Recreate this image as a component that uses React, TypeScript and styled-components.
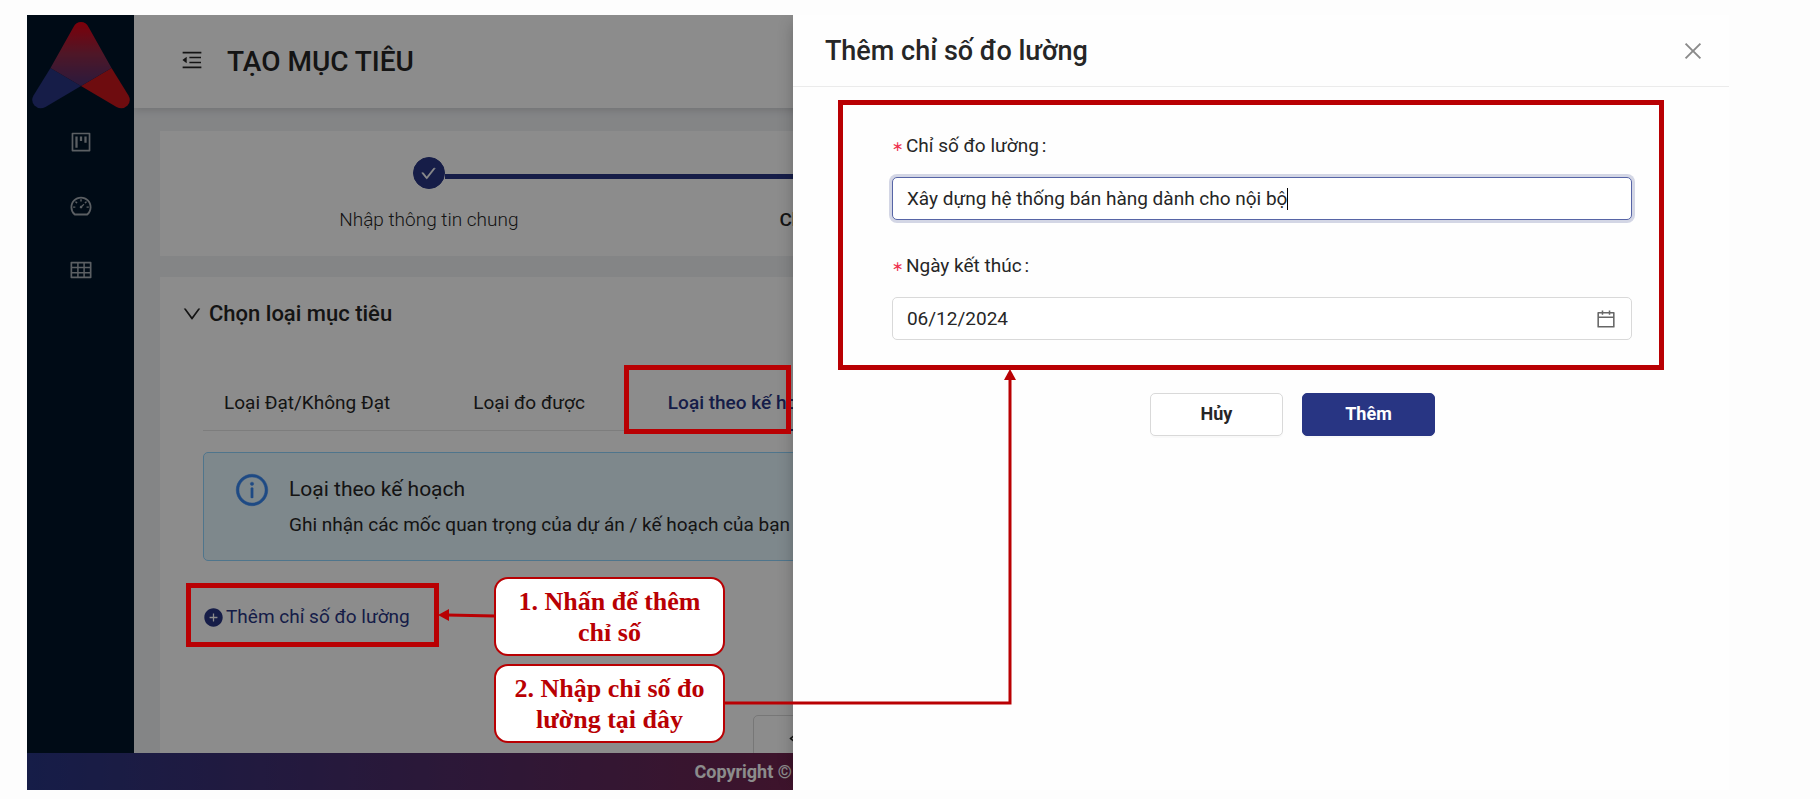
import React from "react";
import styled, { createGlobalStyle } from "styled-components";
import {
  AiOutlineMenuFold,
  AiOutlineProject,
  AiOutlineDashboard,
  AiOutlineTable,
  AiOutlineCalendar,
  AiOutlineClose,
  AiOutlineCheck,
  AiOutlineInfoCircle,
  AiOutlineDown,
  AiOutlineLeft,
  AiFillPlusCircle,
} from "react-icons/ai";

const color = {
  primary: "#283583",
  text: "#262626",
  border: "#d9d9d9",
  mark: "#b90003",
};

const GlobalStyle = createGlobalStyle`
  *, *::before, *::after { box-sizing: border-box; }
  body {
    margin: 0;
    background: #fdfdfd;
    color: ${color.text};
    font-family: Roboto, "Liberation Sans", sans-serif;
    font-size: 19px;
    line-height: 28px;
  }
  h1, h2, h3, p { margin: 0; }
  button, input { font: inherit; color: inherit; }
  svg { display: block; }
`;

const Page = styled.div`
  padding: 15px 91px 9px 27px;
`;

const Screen = styled.div`
  position: relative;
  display: flex;
  flex-direction: column;
  height: calc(100vh - 24px);
  min-height: 640px;
  overflow: hidden;
`;

const Body = styled.div`
  display: flex;
  flex: 1;
  min-height: 0;
`;

const Sidebar = styled.nav`
  display: flex;
  flex-direction: column;
  align-items: center;
  width: 107px;
  flex: none;
  background: #001529;
`;

const LogoLink = styled.a`
  display: block;
  height: 95px;
`;

const NavLink = styled.a`
  display: flex;
  align-items: center;
  justify-content: center;
  width: 100%;
  height: 64px;
  color: rgba(255, 255, 255, 0.65);
  font-size: 24px;
`;

const Main = styled.main`
  flex: 1;
  min-width: 0;
  overflow: hidden;
  background: #f0f2f5;
`;

const Header = styled.header`
  display: flex;
  align-items: center;
  gap: 15px;
  height: 93px;
  padding-left: 38px;
  background: #fff;
  box-shadow: 0 2px 8px rgba(0, 0, 0, 0.15);
`;

const FoldButton = styled.button`
  display: flex;
  align-items: center;
  justify-content: center;
  width: 40px;
  height: 46px;
  padding: 0 0 4px;
  border: 0;
  background: none;
  font-size: 24px;
`;

const PageTitle = styled.h1`
  font-size: 28px;
  line-height: 40px;
  font-weight: 500;
`;

const Content = styled.div`
  display: flex;
  flex-direction: column;
  gap: 21px;
  padding: 23px 44px 0 26px;
`;

const Card = styled.section`
  background: #fff;
`;

const Steps = styled.ol`
  display: grid;
  grid-template-columns: repeat(3, 1fr);
  height: 125px;
  margin: 0;
  padding: 26px 22px 0;
  list-style: none;
`;

const Step = styled.li<{ $current?: boolean }>`
  display: flex;
  flex-direction: column;
  align-items: center;
  gap: 17px;
  font-weight: ${(p) => (p.$current ? 500 : 300)};
  white-space: nowrap;
`;

const StepTrack = styled.div`
  display: flex;
  align-items: center;
  width: 100%;
`;

const StepLine = styled.span<{ $done?: boolean; $hidden?: boolean }>`
  flex: 1;
  height: 5px;
  margin-top: 6px;
  background: ${(p) => (p.$hidden ? "transparent" : p.$done ? color.primary : "#f0f0f0")};
`;

const StepDot = styled.span<{ $done?: boolean }>`
  display: flex;
  align-items: center;
  justify-content: center;
  width: 32px;
  height: 32px;
  border-radius: 50%;
  background: ${(p) => (p.$done ? color.primary : "#fff")};
  border: 1px solid ${color.primary};
  color: #fff;
  font-size: 17px;

  svg { stroke-width: 32px; }
`;

const SectionTitle = styled.h2`
  display: flex;
  align-items: center;
  gap: 6px;
  padding: 22px 0 0 21px;
  font-size: 22px;
  line-height: 30px;
  font-weight: 500;
`;

const SectionBody = styled.div`
  padding: 51px 43px 0;
`;

const TabList = styled.div`
  display: flex;
  gap: 41px;
  border-bottom: 1px solid #e3e3e3;
`;

const Tab = styled.button<{ $active?: boolean }>`
  height: 51px;
  margin-bottom: -1px;
  padding: 0 21px 4px;
  border: 0;
  border-bottom: 2px solid ${(p) => (p.$active ? color.primary : "transparent")};
  background: none;
  color: ${(p) => (p.$active ? color.primary : "inherit")};
  font-weight: ${(p) => (p.$active ? 500 : 400)};
  white-space: nowrap;
`;

const Alert = styled.div`
  display: flex;
  gap: 19px;
  height: 109px;
  margin-top: 21px;
  padding: 18px 30px;
  border: 1px solid #91d5ff;
  border-radius: 5px;
  background: #e6f7ff;
`;

const AlertIcon = styled.span`
  color: #3787f0;
  font-size: 36px;
  padding-top: 1px;

  svg { stroke-width: 14px; }
`;

const AlertTitle = styled.h3`
  font-size: 21px;
  line-height: 36px;
  font-weight: 400;
`;

const AlertText = styled.p`
  line-height: 36px;
  white-space: nowrap;
`;

const AddButton = styled.button`
  display: flex;
  align-items: center;
  gap: 2px;
  margin-top: 42px;
  padding: 0;
  border: 0;
  background: none;
  color: ${color.primary};
`;

const BackRow = styled.div`
  display: flex;
  justify-content: center;
  padding: 84px 0 20px;
`;

const BackButton = styled.button`
  display: flex;
  align-items: center;
  gap: 12px;
  width: 340px;
  height: 46px;
  padding: 0 31px;
  border: 1px solid ${color.border};
  border-radius: 5px;
  background: #fff;
`;

const Footer = styled.footer`
  height: 37px;
  flex: none;
  background: linear-gradient(90deg, #283583, #ca1010);
`;

const FooterText = styled.p`
  width: 45%;
  padding-right: 1px;
  color: #fff;
  font-size: 18px;
  font-weight: 700;
  line-height: 37px;
  text-align: right;
`;

const Mask = styled.div`
  position: absolute;
  inset: 0;
  background: rgba(0, 0, 0, 0.45);
`;

const Drawer = styled.aside`
  position: absolute;
  top: 0;
  right: 0;
  bottom: 0;
  width: 55%;
  background: #fefefe;
  box-shadow: -6px 0 16px -8px rgba(0, 0, 0, 0.3);
`;

const DrawerHeader = styled.header`
  display: flex;
  align-items: center;
  justify-content: space-between;
  height: 72px;
  padding: 0 24px 0 32px;
  border-bottom: 1px solid #ebebeb;
`;

const DrawerTitle = styled.h2`
  font-size: 27px;
  line-height: 36px;
  font-weight: 500;
`;

const CloseButton = styled.button`
  padding: 0;
  border: 0;
  background: none;
  color: #8a8a8a;
  font-size: 24px;
`;

const Form = styled.form`
  padding: 13px 65px 0 45px;
`;

const Fields = styled.div`
  display: flex;
  flex-direction: column;
  gap: 31px;
  padding: 27px 27px 24px 49px;
  border: 5px solid ${color.mark};
`;

const Field = styled.div`
  display: flex;
  flex-direction: column;
  gap: 17px;
`;

const Label = styled.label`
  display: flex;
  gap: 5px;
`;

const Required = styled.span`
  width: 9px;
  color: #ee3350;
  font-family: "DejaVu Sans", sans-serif;
  font-size: 14px;
  text-align: center;
`;

const LabelText = styled.span`
  &::after {
    content: ":";
    margin-left: 3px;
  }
`;

const InputBox = styled.div<{ $focused?: boolean }>`
  display: flex;
  align-items: center;
  height: 43px;
  margin-bottom: 1px;
  padding: 0 14px;
  border: 1px solid ${(p) => (p.$focused ? "#5765a6" : color.border)};
  border-radius: 5px;
  background: #fff;
  box-shadow: ${(p) => (p.$focused ? "0 0 0 3px rgba(40, 53, 131, 0.2)" : "none")};
  color: #666;
  font-size: 22px;
`;

const TextInput = styled.input<{ $fit?: boolean }>`
  ${(p) => (p.$fit ? "field-sizing: content;" : "flex: 1;")}
  min-width: 0;
  padding: 0;
  border: 0;
  outline: 0;
  background: none;
  color: ${color.text};
  font-size: 19px;
`;

const Caret = styled.span`
  width: 1px;
  height: 22px;
  background: #000;
`;

const Actions = styled.div`
  display: flex;
  justify-content: center;
  gap: 19px;
  padding: 23px 0 0 83px;
`;

const ActionButton = styled.button<{ $primary?: boolean }>`
  width: 133px;
  height: 43px;
  padding: 0 0 2px;
  border: 1px solid ${(p) => (p.$primary ? color.primary : color.border)};
  border-radius: 5px;
  background: ${(p) => (p.$primary ? color.primary : "#fff")};
  box-shadow: 0 2px 0 rgba(0, 0, 0, 0.02);
  color: ${(p) => (p.$primary ? "#fff" : color.text)};
  font-size: 18px;
  font-weight: 700;
`;

const Annotations = styled.div`
  position: absolute;
  inset: 0;
  pointer-events: none;
`;

const Frame = styled.div<{ $x: number; $y: number; $w: number; $h: number }>`
  position: absolute;
  left: ${(p) => p.$x}px;
  top: ${(p) => p.$y}px;
  width: ${(p) => p.$w}px;
  height: ${(p) => p.$h}px;
  border: 5px solid ${color.mark};
`;

const Callout = styled.div<{ $y: number }>`
  position: absolute;
  left: 467px;
  top: ${(p) => p.$y}px;
  display: flex;
  align-items: center;
  justify-content: center;
  width: 231px;
  height: 79px;
  padding: 0 16px;
  border: 2px solid ${color.mark};
  border-radius: 14px;
  background: #fff;
  color: ${color.mark};
  font-family: "Liberation Serif", "Times New Roman", serif;
  font-size: 26px;
  line-height: 31px;
  font-weight: 700;
  text-align: center;
`;

const Arrows = styled.svg`
  position: absolute;
  left: 0;
  top: 0;
  overflow: visible;
`;

function Logo() {
  return (
    <svg width="98" height="95" viewBox="0 0 98 95" aria-hidden="true">
      <defs>
        <linearGradient id="peak" x1="0" y1="0" x2="0" y2="1">
          <stop offset="0" stopColor="#e30012" />
          <stop offset="0.5" stopColor="#8f2a48" />
          <stop offset="1" stopColor="#4f3070" />
        </linearGradient>
      </defs>
      <path d="M18.500 53 L49 71 L13.500 92 Q7 95 2.500 90.500 Q-1.500 86 1.500 80.500 Z" fill="#283583" />
      <path d="M79.500 53 L49 71 L84.500 92 Q91 95 95.500 90.500 Q99.500 86 96.500 80.500 Z" fill="#c8161d" />
      <path d="M18.500 53 L41.500 12 Q44 7 49 7 Q54 7 56.500 12 L79.500 53 L49 71 Z" fill="url(#peak)" />
    </svg>
  );
}

export default function App() {
  return (
    <Page>
      <GlobalStyle />
      <Screen>
        <Body>
          <Sidebar>
            <LogoLink href="#" aria-label="Home">
              <Logo />
            </LogoLink>
            <NavLink href="#" aria-label="Project"><AiOutlineProject /></NavLink>
            <NavLink href="#" aria-label="Dashboard"><AiOutlineDashboard /></NavLink>
            <NavLink href="#" aria-label="Table"><AiOutlineTable /></NavLink>
          </Sidebar>
          <Main>
            <Header>
              <FoldButton type="button" aria-label="Menu"><AiOutlineMenuFold /></FoldButton>
              <PageTitle>TẠO MỤC TIÊU</PageTitle>
            </Header>
            <Content>
              <Card>
                <Steps>
                  <Step>
                    <StepTrack>
                      <StepLine $hidden />
                      <StepDot $done><AiOutlineCheck /></StepDot>
                      <StepLine $done />
                    </StepTrack>
                    Nhập thông tin chung
                  </Step>
                  <Step $current>
                    <StepTrack>
                      <StepLine $done />
                      <StepDot $done />
                      <StepLine />
                    </StepTrack>
                    Chọn loại mục tiêu và thêm chỉ số
                  </Step>
                </Steps>
              </Card>
              <Card>
                <SectionTitle>
                  <AiOutlineDown />
                  Chọn loại mục tiêu
                </SectionTitle>
                <SectionBody>
                  <TabList role="tablist">
                    <Tab type="button" role="tab">Loại Đạt/Không Đạt</Tab>
                    <Tab type="button" role="tab">Loại đo được</Tab>
                    <Tab type="button" role="tab" aria-selected $active>Loại theo kế hoạch</Tab>
                  </TabList>
                  <Alert>
                    <AlertIcon><AiOutlineInfoCircle /></AlertIcon>
                    <div>
                      <AlertTitle>Loại theo kế hoạch</AlertTitle>
                      <AlertText>Ghi nhận các mốc quan trọng của dự án / kế hoạch của bạn để</AlertText>
                    </div>
                  </Alert>
                  <AddButton type="button">
                    <AiFillPlusCircle size={21} />
                    Thêm chỉ số đo lường
                  </AddButton>
                  <BackRow>
                    <BackButton type="button" aria-label="Back"><AiOutlineLeft /></BackButton>
                  </BackRow>
                </SectionBody>
              </Card>
            </Content>
          </Main>
        </Body>
        <Footer>
          <FooterText>Copyright ©</FooterText>
        </Footer>
        <Mask />
        <Drawer role="dialog" aria-labelledby="drawer-title">
          <DrawerHeader>
            <DrawerTitle id="drawer-title">Thêm chỉ số đo lường</DrawerTitle>
            <CloseButton type="button" aria-label="Close"><AiOutlineClose /></CloseButton>
          </DrawerHeader>
          <Form>
            <Fields>
              <Field>
                <Label htmlFor="metric">
                  <Required>∗</Required>
                  <LabelText>Chỉ số đo lường</LabelText>
                </Label>
                <InputBox $focused>
                  <TextInput id="metric" type="text" $fit defaultValue="Xây dựng hệ thống bán hàng dành cho nội bộ" />
                  <Caret />
                </InputBox>
              </Field>
              <Field>
                <Label htmlFor="end-date">
                  <Required>∗</Required>
                  <LabelText>Ngày kết thúc</LabelText>
                </Label>
                <InputBox>
                  <TextInput id="end-date" type="text" defaultValue="06/12/2024" />
                  <AiOutlineCalendar />
                </InputBox>
              </Field>
            </Fields>
            <Actions>
              <ActionButton type="button">Hủy</ActionButton>
              <ActionButton type="submit" $primary>Thêm</ActionButton>
            </Actions>
          </Form>
        </Drawer>
        <Annotations>
          <Frame $x={597} $y={350} $w={167} $h={69} />
          <Frame $x={159} $y={568} $w={253} $h={64} />
          <Arrows width="1000" height="760" fill="none" stroke={color.mark} strokeWidth="3" aria-hidden="true">
            <path d="M468 601 L420 600" />
            <path d="M411 600 L422 594 L422 606 Z" fill={color.mark} stroke="none" />
            <path d="M697 688 H983 V364" />
            <path d="M983 354 L977 365 L989 365 Z" fill={color.mark} stroke="none" />
          </Arrows>
          <Callout $y={562}>1. Nhấn để thêm chỉ số</Callout>
          <Callout $y={649}>2. Nhập chỉ số đo lường tại đây</Callout>
        </Annotations>
      </Screen>
    </Page>
  );
}
